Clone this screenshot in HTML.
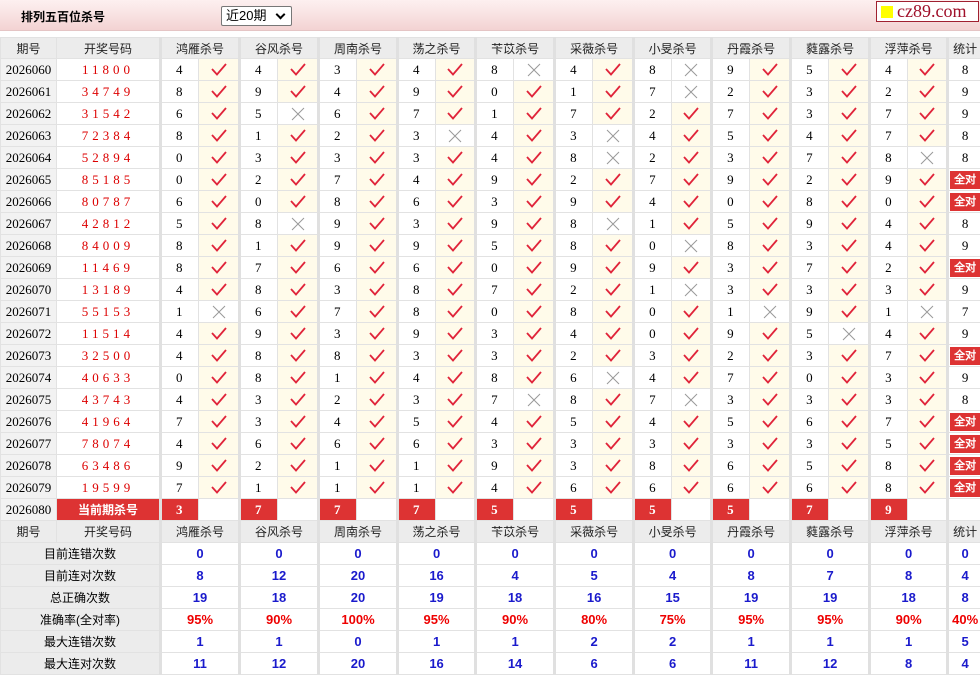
<!DOCTYPE html>
<html><head><meta charset="utf-8"><style>
*{margin:0;padding:0;box-sizing:border-box}
body{width:980px;height:673px;overflow:hidden;background:#fff;font-family:"Liberation Sans","Noto Sans CJK SC",sans-serif;font-size:12px;color:#000;position:relative}
.top{position:absolute;left:0;top:0;width:980px;height:31px;background:linear-gradient(#fdf0f0,#f3d3d3);border-bottom:1px solid #e5c5c5}
.title{position:absolute;left:21px;top:8px;font-weight:bold;font-size:12px}
.sel{position:absolute;left:221px;top:6px;width:71px;height:20px;border:1px solid #777;border-radius:2px;background:#fff;font-size:13px;padding-left:4px;line-height:18px}
.sel:after{content:"";position:absolute;right:7px;top:4px;width:5px;height:5px;border-right:2px solid #000;border-bottom:2px solid #000;transform:rotate(45deg)}
.logo{position:absolute;left:876px;top:1px;width:103px;height:21px;border:1px solid #a02030;background:#fff;color:#a0102a;font-family:"Liberation Serif",serif;font-size:18px;line-height:19px;padding-left:20px}
.logo:before{content:"";position:absolute;left:4px;top:4px;width:12px;height:12px;background:#ff0}
table{position:absolute;left:0;top:37px;border-collapse:collapse;table-layout:fixed;width:980px}
td{height:22px;border:1px solid #e2e2e2;text-align:center;padding:0;overflow:hidden;white-space:nowrap}
tr.h td{background:#ececec;height:21px;color:#222}
tr.h2 td{background:#ececec;height:22px;color:#222}
td.q{background:#f2f2f2;font-family:"Liberation Serif",serif;font-size:13px}
td.k{color:#d00;font-family:"Liberation Serif",serif;font-size:13px;letter-spacing:4px}
td.n{font-family:"Liberation Serif",serif;font-size:13px;text-align:left;padding-left:14px}
td.g{border-left:3px solid #e0e0e0}
td.m{background:#fffbea}
td.x{background:#fff}
td.s{font-family:"Liberation Serif",serif;font-size:13px}
.qd{background:#d33;color:#fff;font-size:11px;font-weight:bold;display:inline-block;width:30px;line-height:18px}
td.cur{background:#d33;color:#fff;font-weight:bold}
td.cn{background:#d33;color:#fff;font-weight:bold;font-family:"Liberation Serif",serif;font-size:13px;text-align:left;padding-left:14px}
td.lab{background:#ececec}
td.b{font-weight:bold;color:#1a1acc;font-size:13px}
td.r{font-weight:bold;color:#e00;font-size:13px}
svg{display:block;margin:auto}
</style></head><body>
<div class="top"><div class="title">排列五百位杀号</div><div class="sel">近20期</div><div class="logo">cz89.com</div></div>
<table id="t"></table>
<script>
var names=["鸿雁","谷风","周南","荡之","苄苡","采薇","小旻","丹霞","蕤露","浮萍"];
var W=[79,79,79,78,79,79,78,79,79,78];
var rows=[
["2026060","11800","4v4v3v4v8x4v8x9v5v4v","8"],
["2026061","34749","8v9v4v9v0v1v7x2v3v2v","9"],
["2026062","31542","6v5x6v7v1v7v2v7v3v7v","9"],
["2026063","72384","8v1v2v3x4v3x4v5v4v7v","8"],
["2026064","52894","0v3v3v3v4v8x2v3v7v8x","8"],
["2026065","85185","0v2v7v4v9v2v7v9v2v9v","A"],
["2026066","80787","6v0v8v6v3v9v4v0v8v0v","A"],
["2026067","42812","5v8x9v3v9v8x1v5v9v4v","8"],
["2026068","84009","8v1v9v9v5v8v0x8v3v4v","9"],
["2026069","11469","8v7v6v6v0v9v9v3v7v2v","A"],
["2026070","13189","4v8v3v8v7v2v1x3v3v3v","9"],
["2026071","55153","1x6v7v8v0v8v0v1x9v1x","7"],
["2026072","11514","4v9v3v9v3v4v0v9v5x4v","9"],
["2026073","32500","4v8v8v3v3v2v3v2v3v7v","A"],
["2026074","40633","0v8v1v4v8v6x4v7v0v3v","9"],
["2026075","43743","4v3v2v3v7x8v7x3v3v3v","8"],
["2026076","41964","7v3v4v5v4v5v4v5v6v7v","A"],
["2026077","78074","4v6v6v6v3v3v3v3v3v5v","A"],
["2026078","63486","9v2v1v1v9v3v8v6v5v8v","A"],
["2026079","19599","7v1v1v1v4v6v6v6v6v8v","A"]];
var CK='<svg width="16" height="13"><path d="M1 6 L6 11.5 L15 1" fill="none" stroke="#e0243a" stroke-width="1.8"/></svg>';
var XX='<svg width="14" height="14"><path d="M1 1 L13 13 M13 1 L1 13" fill="none" stroke="#999" stroke-width="1"/></svg>';
var h='<colgroup><col style="width:56px"><col style="width:104px">';
W.forEach(function(w){h+='<col style="width:38px"><col style="width:'+(w-38)+'px">'});
h+='<col style="width:34px"></colgroup>';
function head(c){var s='<tr class="'+c+'"><td>期号</td><td>开奖号码</td>';names.forEach(function(n){s+='<td colspan="2" class="g">'+n+'杀号</td>'});return s+'<td class="g">统计</td></tr>';}
h+=head('h');
rows.forEach(function(r){
 h+='<tr><td class="q">'+r[0]+'</td><td class="k">'+r[1]+'</td>';
 for(var i=0;i<10;i++){var n=r[2][i*2],m=r[2][i*2+1];h+='<td class="n g">'+n+'</td><td class="'+(m=='v'?'m':'x')+'">'+(m=='v'?CK:XX)+'</td>';}
 h+='<td class="s g">'+(r[3]=='A'?'<span class="qd">全对</span>':r[3])+'</td></tr>';
});
var cur=[3,7,7,7,5,5,5,5,7,9];
h+='<tr><td class="q">2026080</td><td class="cur">当前期杀号</td>';
cur.forEach(function(c){h+='<td class="cn g">'+c+'</td><td></td>'});
h+='<td class="g"></td></tr>';
h+=head('h2');
var st=[["目前连错次数","0 0 0 0 0 0 0 0 0 0 0",'b'],["目前连对次数","8 12 20 16 4 5 4 8 7 8 4",'b'],["总正确次数","19 18 20 19 18 16 15 19 19 18 8",'b'],["准确率(全对率)","95% 90% 100% 95% 90% 80% 75% 95% 95% 90% 40%",'r'],["最大连错次数","1 1 0 1 1 2 2 1 1 1 5",'b'],["最大连对次数","11 12 20 16 14 6 6 11 12 8 4",'b']];
st.forEach(function(s){var v=s[1].split(' ');h+='<tr><td colspan="2" class="lab">'+s[0]+'</td>';for(var i=0;i<10;i++)h+='<td colspan="2" class="g '+s[2]+'">'+v[i]+'</td>';h+='<td class="g '+s[2]+'">'+v[10]+'</td></tr>';});
document.getElementById('t').innerHTML=h;
</script>
</body></html>
